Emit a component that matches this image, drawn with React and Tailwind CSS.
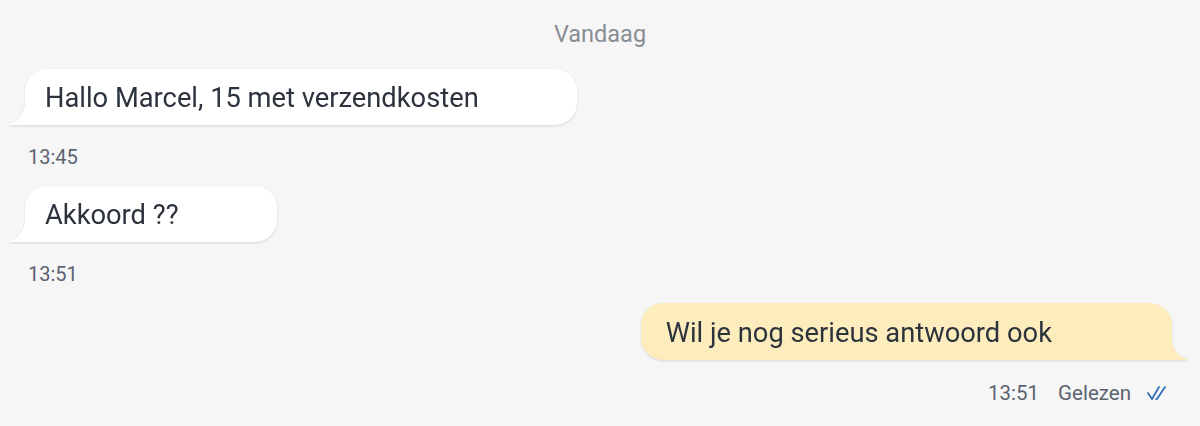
import React from 'react';

const font = { fontFamily: 'Roboto, "Noto Sans", sans-serif' };

// Incoming bubble with tail bottom-left
const Incoming = ({ text }) => (
  <div className="relative ml-[25px] self-start drop-shadow-[0_1px_1px_rgba(0,0,0,0.13)]">
    <svg className="absolute -left-[16px] bottom-0" width="17" height="32" viewBox="0 0 17 32">
      <path d="M17 0 C17 18 12 28 0 31 Q0 32 2 32 L17 32 Z" fill="#ffffff" />
    </svg>
    <div className="flex h-[56px] items-center rounded-[22px] rounded-bl-none bg-white pt-[3px] pl-[20px] pr-[98px] text-[27.3px] text-[#2c333d]">
      {text}
    </div>
  </div>
);

const Outgoing = ({ text }) => (
  <div className="relative mr-[28px] self-end drop-shadow-[0_1px_1px_rgba(0,0,0,0.13)]">
    <svg className="absolute -right-[15px] bottom-0" width="16" height="32" viewBox="0 0 16 32">
      <path d="M0 0 C0 18 4 28 16 31 Q16 32 14 32 L0 32 Z" fill="#fdedbd" />
    </svg>
    <div className="flex h-[57px] items-center rounded-[22px] rounded-br-none bg-[#fdedbd] pt-[3px] pl-[25px] pr-[120px] text-[27.3px] text-[#2c333d]">
      {text}
    </div>
  </div>
);

const Time = ({ children }) => (
  <div className="ml-[28px] flex h-[61px] items-center pt-[3px] text-[20px] text-[#5b6370]">{children}</div>
);

const DoubleCheck = () => (
  <svg width="24" height="16" viewBox="0 0 24 16" fill="none" stroke="#2b6cb3" strokeWidth="1.7" strokeLinecap="round" strokeLinejoin="round">
    <path d="M2 8 L6 14 L13 2" />
    <path d="M10 14 L11 14 L19 2" />
  </svg>
);

export default function App() {
  return (
    <div className="flex h-[426px] w-[1200px] flex-col bg-[#f6f6f6]" style={font}>
      <div className="flex h-[69px] items-center justify-center text-[23.5px] text-[#898d94]">Vandaag</div>
      <Incoming text="Hallo Marcel, 15 met verzendkosten" />
      <Time>13:45</Time>
      <Incoming text="Akkoord ??" />
      <Time>13:51</Time>
      <Outgoing text="Wil je nog serieus antwoord ook" />
      <div className="mr-[30px] flex h-[64px] items-center justify-end pt-[2px] text-[20.5px] text-[#5b6370]">
        <span>13:51</span>
        <span className="ml-[19px]">Gelezen</span>
        <span className="ml-[15px]"><DoubleCheck /></span>
      </div>
    </div>
  );
}
